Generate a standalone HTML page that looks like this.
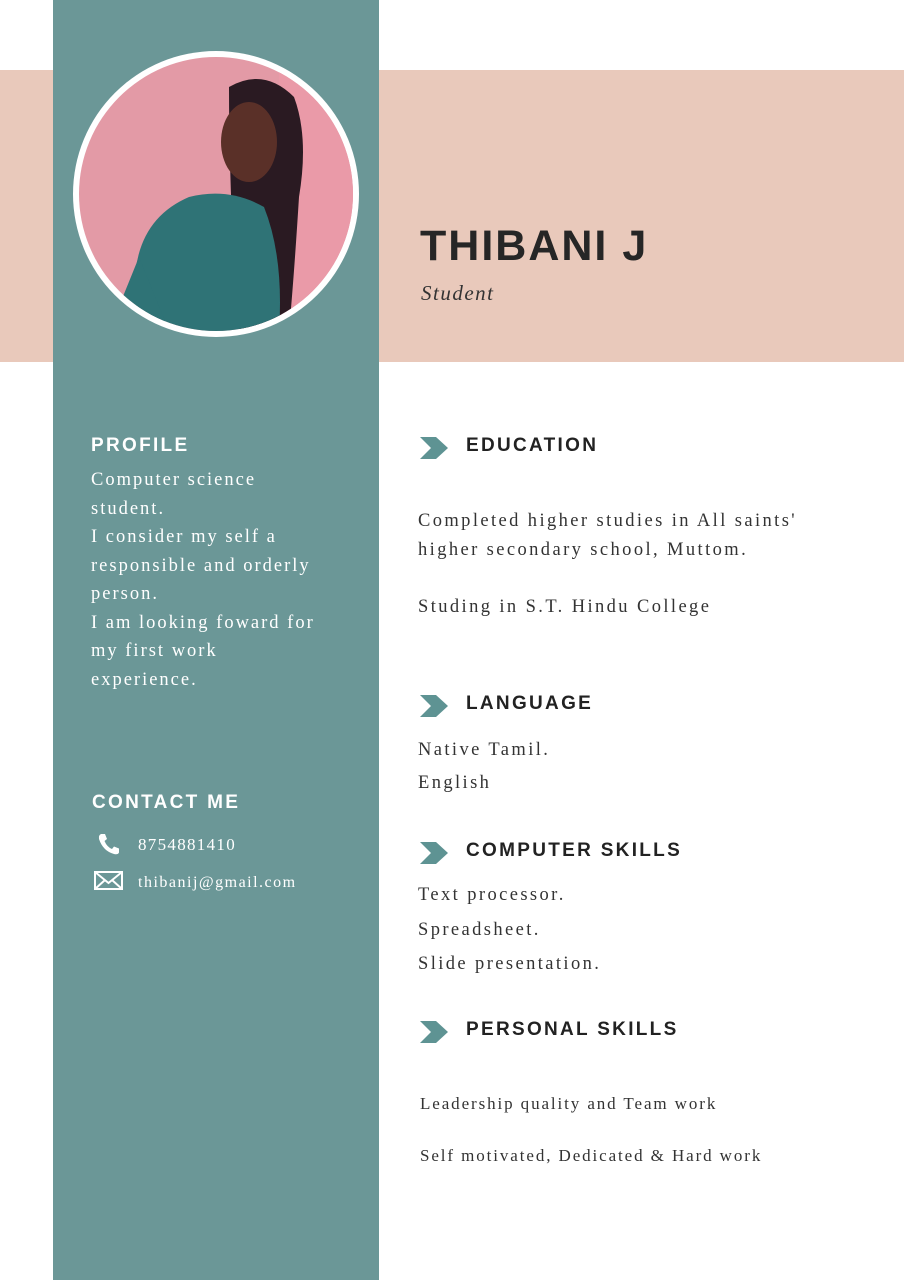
<!DOCTYPE html>
<html><head><meta charset="utf-8"><style>
*{margin:0;padding:0;box-sizing:border-box}
body{width:904px;height:1280px;background:#fff;position:relative;overflow:hidden;font-family:"Liberation Serif",serif}
.a{position:absolute}
.band{top:70px;height:292px;background:#e9c9bb}
.side{left:53px;top:0;width:326px;height:1280px;background:#6b9797}
.h{font-family:"Liberation Sans",sans-serif;font-weight:bold;letter-spacing:2.3px;font-size:19px;color:#222}
.sh{color:#fff;font-size:19px}
.t{font-size:18.5px;letter-spacing:2.4px;color:#333;line-height:29px}
.w{color:#fff}
</style></head><body>
<div class="a band" style="left:0;width:53px"></div>
<div class="a band" style="left:379px;width:525px"></div>
<div class="a side"></div>
<div class="a" style="left:73px;top:51px;width:286px;height:286px;border-radius:50%;background:#fff"></div>
<svg class="a" style="left:79px;top:57px" width="274" height="274" viewBox="0 0 274 274">
<defs><clipPath id="c"><circle cx="137" cy="137" r="137"/></clipPath></defs>
<g clip-path="url(#c)">
<rect width="274" height="274" fill="#e39aa6"/>
<rect x="200" width="74" height="274" fill="#ea9aa8"/>
<path d="M150 30 Q185 10 215 40 Q230 80 220 140 Q215 220 210 274 L160 274 Q150 150 150 30Z" fill="#2a1a22"/>
<ellipse cx="170" cy="85" rx="28" ry="40" fill="#5a3028"/>
<path d="M60 274 Q40 170 110 140 Q150 130 185 150 Q205 200 200 274Z" fill="#2f7376"/>
<path d="M30 274 L60 200 L90 274Z" fill="#2f7376"/>
</g></svg>
<div class="a h" style="left:420px;top:222px;font-size:43px;letter-spacing:2px;color:#262626">THIBANI J</div>
<div class="a" style="left:421px;top:281px;font-size:21px;font-style:italic;letter-spacing:1.5px;color:#333">Student</div>

<div class="a h sh" style="left:91px;top:435px">PROFILE</div>
<div class="a t w" style="left:91px;top:466px;width:235px;line-height:28.5px;letter-spacing:2px">Computer science student.<br>I consider my self a responsible and orderly person.<br>I am looking foward for my first work experience.</div>
<div class="a h sh" style="left:92px;top:792px">CONTACT ME</div>
<svg class="a" style="left:97px;top:832px" width="24" height="24" viewBox="0 0 24 24"><path d="M4 2 L8 2 L10 7 L7.5 9 Q10 15 15 17 L17 14.5 L22 16.5 L22 20.5 Q21 23 17 22 Q6 19 2 7 Q1.5 3 4 2Z" fill="#fff"/></svg>
<div class="a t w" style="left:138px;top:830px;font-size:17px;letter-spacing:1.3px">8754881410</div>
<svg class="a" style="left:94px;top:871px" width="29" height="20" viewBox="0 0 29 20"><rect x="1" y="1" width="27" height="17" fill="none" stroke="#fff" stroke-width="2"/><path d="M1 1 L14.5 12 L28 1 M1 18 L11 9 M28 18 L18 9" fill="none" stroke="#fff" stroke-width="2"/></svg>
<div class="a t w" style="left:138px;top:868px;font-size:16px;letter-spacing:1.5px">thibanij@gmail.com</div>

<svg style="display:none"><symbol id="ch" viewBox="0 0 28 22"><path d="M0 0 L16 0 L28 11 L16 22 L0 22 L11 11Z" fill="#5e9393"/></symbol></svg>
<svg class="a" style="left:420px;top:437px" width="28" height="22"><use href="#ch"/></svg>
<div class="a h" style="left:466px;top:435px">EDUCATION</div>
<div class="a t" style="left:418px;top:507px">Completed higher studies in All saints'<br>higher secondary school, Muttom.</div>
<div class="a t" style="left:418px;top:593px">Studing in S.T. Hindu College</div>

<svg class="a" style="left:420px;top:695px" width="28" height="22"><use href="#ch"/></svg>
<div class="a h" style="left:466px;top:693px">LANGUAGE</div>
<div class="a t" style="left:418px;top:734px;line-height:33px">Native Tamil.<br>English</div>

<svg class="a" style="left:420px;top:842px" width="28" height="22"><use href="#ch"/></svg>
<div class="a h" style="left:466px;top:840px">COMPUTER SKILLS</div>
<div class="a t" style="left:418px;top:878px;line-height:34.5px">Text processor.<br>Spreadsheet.<br>Slide presentation.</div>

<svg class="a" style="left:420px;top:1021px" width="28" height="22"><use href="#ch"/></svg>
<div class="a h" style="left:466px;top:1019px">PERSONAL SKILLS</div>
<div class="a t" style="left:420px;top:1089px;font-size:17px;letter-spacing:1.9px">Leadership quality and Team work</div>
<div class="a t" style="left:420px;top:1141px;font-size:17px;letter-spacing:1.9px">Self motivated, Dedicated &amp; Hard work</div>
</body></html>
